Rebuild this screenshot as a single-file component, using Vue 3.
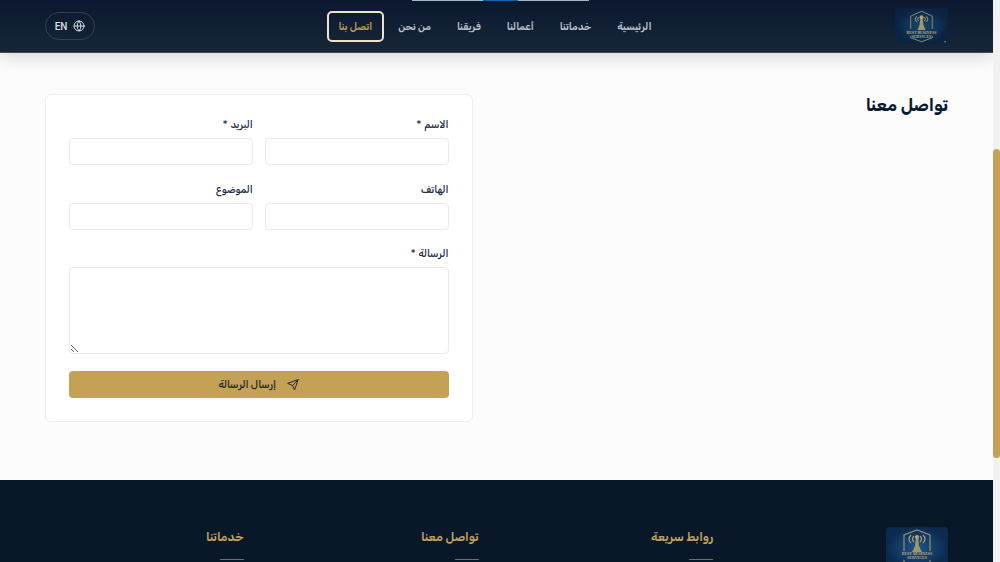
<script setup>
import { ref } from 'vue'

const nav = ['الرئيسية', 'خدماتنا', 'أعمالنا', 'فريقنا', 'من نحن', 'اتصل بنا']
const active = ref(5)
const fields = [
  { id: 'name', label: 'الاسم', required: true, type: 'text' },
  { id: 'email', label: 'البريد', required: true, type: 'email' },
  { id: 'phone', label: 'الهاتف', required: false, type: 'tel' },
  { id: 'subject', label: 'الموضوع', required: false, type: 'text' },
]
const columns = ['روابط سريعة', 'تواصل معنا', 'خدماتنا']
const logos = { header: 'header-logo', footer: 'footer-logo' }
</script>

<template>
  <div class="page" dir="rtl">
    <header class="header">
      <span class="peek"></span>
      <a href="#" class="brand" aria-label="Best Business Services">
        <svg class="logo" viewBox="0 0 54 36" aria-hidden="true">
          <defs>
            <radialGradient :id="logos.header">
              <stop offset="0" stop-color="#174873" />
              <stop offset="1" stop-color="#0a2342" />
            </radialGradient>
          </defs>
          <rect width="54" height="36" rx="3" :fill="`url(#${logos.header})`" />
          <g fill="none" stroke="#8f8769" stroke-width="1">
            <path d="M16 21V8l11-5 11 5v13M16 28v2l11 4 11-4v-2" />
            <path d="M22 8q-3 3 0 6M32 8q3 3 0 6M24 9q-2 2 0 4M30 9q2 2 0 4" stroke="#a99d78" />
          </g>
          <path d="M26 8h2l1 9 2 5h-8l2-5z" fill="#a3946a" />
          <circle cx="27" cy="9" r="2" fill="#b8a676" />
          <g class="logo-text">
            <text x="27" y="26">BEST BUSINESS</text>
            <text x="27" y="30">SERVICES</text>
          </g>
          <circle cx="51" cy="34" r="0.7" fill="#9fb1c2" />
        </svg>
      </a>
      <nav class="nav">
        <a v-for="(item, i) in nav" :key="item" href="#" :class="{ active: i === active }" @click.prevent="active = i">{{ item }}</a>
      </nav>
      <button class="lang" type="button">
        <svg viewBox="0 0 24 24" aria-hidden="true">
          <circle cx="12" cy="12" r="10" />
          <path d="M2 12h20M12 2a15 15 0 0 1 0 20a15 15 0 0 1 0-20" />
        </svg>
        <span>EN</span>
      </button>
    </header>

    <main class="contact">
      <h2>تواصل معنا</h2>
      <form class="card" @submit.prevent>
        <div class="fields">
          <div v-for="f in fields" :key="f.id" class="field">
            <label :for="f.id">{{ f.label }}<span v-if="f.required" class="star"> *</span></label>
            <input :id="f.id" :type="f.type" />
          </div>
        </div>
        <div class="field">
          <label for="message">الرسالة<span class="star"> *</span></label>
          <textarea id="message"></textarea>
        </div>
        <button class="send" type="submit">
          <svg viewBox="0 0 24 24" aria-hidden="true">
            <path d="M22 2L15 22l-4-9-9-4zM22 2L11 13" />
          </svg>
          <span>إرسال الرسالة</span>
        </button>
      </form>
    </main>

    <footer class="footer">
      <div>
        <svg class="footer-logo" viewBox="0 0 62 42" aria-hidden="true">
          <defs>
            <radialGradient :id="logos.footer">
              <stop offset="0" stop-color="#1d5688" />
              <stop offset="1" stop-color="#0b2a4e" />
            </radialGradient>
          </defs>
          <rect width="62" height="42" rx="4" :fill="`url(#${logos.footer})`" />
          <g fill="none" stroke="#968d6c" stroke-width="1.2">
            <path d="M18 24V8l13-5 13 5v16M18 33v3l13 5 13-5v-3" />
            <path d="M25 8q-4 4 0 8M37 8q4 4 0 8M28 9q-3 3 0 6M34 9q3 3 0 6" stroke="#a99d78" />
          </g>
          <path d="M30 9h2l1 10 3 6h-10l3-6z" fill="#a3946a" />
          <circle cx="31" cy="10" r="2" fill="#b8a676" />
          <g class="logo-text">
            <text x="31" y="28">BEST BUSINESS</text>
            <text x="31" y="32">SERVICES</text>
          </g>
        </svg>
      </div>
      <h3 v-for="c in columns" :key="c">{{ c }}</h3>
    </footer>
    <div class="rail"><div class="thumb"></div></div>
  </div>
</template>

<style>
body { overflow: hidden; }
</style>

<style scoped>
* { box-sizing: border-box; }
.page {
  height: 100vh;
  overflow: hidden;
  padding-right: 7px;
  background: #fcfcfc;
  color: #0b1b2f;
  font-family: Rubik, "Noto Sans Arabic", "Noto Sans", "DejaVu Sans", sans-serif;
  font-size: 10px;
}
.header {
  position: relative;
  display: flex;
  align-items: center;
  justify-content: space-between;
  height: 53px;
  padding: 0 45px;
  background: linear-gradient(#0b1830, #162637);
  border-bottom: 1px solid #46484f;
  box-shadow: 0 4px 16px rgba(30, 20, 30, 0.16);
}
.peek {
  position: absolute;
  top: 0;
  left: 412px;
  width: 177px;
  height: 1px;
  background: linear-gradient(90deg, #a5b5c2 40%, #1264a5 40% 60%, #a5b5c2 60%);
}
.brand, .logo, .footer-logo { display: block; }
.logo { width: 53px; height: 36px; }
.logo-text {
  fill: #bba87a;
  font: 700 4px "Liberation Serif", serif;
  text-anchor: middle;
  direction: ltr;
}
.nav { display: flex; gap: 2px; }
.nav a {
  padding: 2px 10px 0;
  border: 2px solid transparent;
  border-radius: 5px;
  color: #b9c1cb;
  font-weight: 600;
  line-height: 25px;
  text-decoration: none;
  white-space: nowrap;
}
.nav a.active { border-color: #eee2c9; color: #b89851; }
.lang {
  display: flex;
  align-items: center;
  justify-content: center;
  gap: 6px;
  width: 50px;
  height: 28px;
  padding: 0;
  border: 1px solid #354247;
  border-radius: 14px;
  background: transparent;
  color: #d6dce3;
  font: 500 10px Roboto, sans-serif;
}
.lang svg, .send svg {
  width: 12px;
  height: 12px;
  fill: none;
  stroke: currentColor;
  stroke-width: 2;
  stroke-linejoin: round;
  stroke-linecap: round;
}
.contact {
  display: grid;
  grid-template-columns: 1fr 1fr;
  gap: 48px;
  align-items: start;
  padding: 41px 45px 58px;
}
h2 { margin: 0; font-size: 17px; line-height: 22px; font-weight: 700; }
.card {
  padding: 23px;
  border: 1px solid #efeff0;
  border-radius: 6px;
  background: #fff;
}
.fields { display: grid; grid-template-columns: 1fr 1fr; gap: 18px 12px; margin-bottom: 17px; }
label { display: block; margin-bottom: 6px; line-height: 14px; color: #253042; font-weight: 500; }
.star { font-family: Inter, sans-serif; line-height: 1; }
input, textarea {
  display: block;
  width: 100%;
  height: 27px;
  padding: 4px 8px;
  border: 1px solid #e9eaec;
  border-radius: 4px;
  background: #fff;
  font: inherit;
}
textarea { height: 87px; resize: vertical; }
.send {
  display: flex;
  align-items: center;
  justify-content: center;
  gap: 11px;
  width: 100%;
  height: 27px;
  margin-top: 17px;
  padding: 0;
  border: 0;
  border-radius: 4px;
  background: #c5a155;
  color: #202832;
  font: inherit;
  font-weight: 500;
}
.footer {
  display: grid;
  grid-template-columns: repeat(4, 1fr);
  gap: 36px;
  min-height: 100px;
  padding: 47px 45px;
  background: #081829;
}
.footer-logo { width: 62px; height: 42px; }
h3 {
  margin: 0;
  color: #c5a15a;
  font-size: 12px;
  font-weight: 600;
  line-height: 21px;
}
h3::after { content: ""; display: block; width: 24px; height: 1px; margin-top: 11px; background: #77704f; }
.rail { position: fixed; top: 0; bottom: 0; right: 0; width: 7px; background: #f1f1f1; }
.thumb { height: 55%; margin-top: 149px; border-radius: 4px; background: #c5a155; }
</style>
